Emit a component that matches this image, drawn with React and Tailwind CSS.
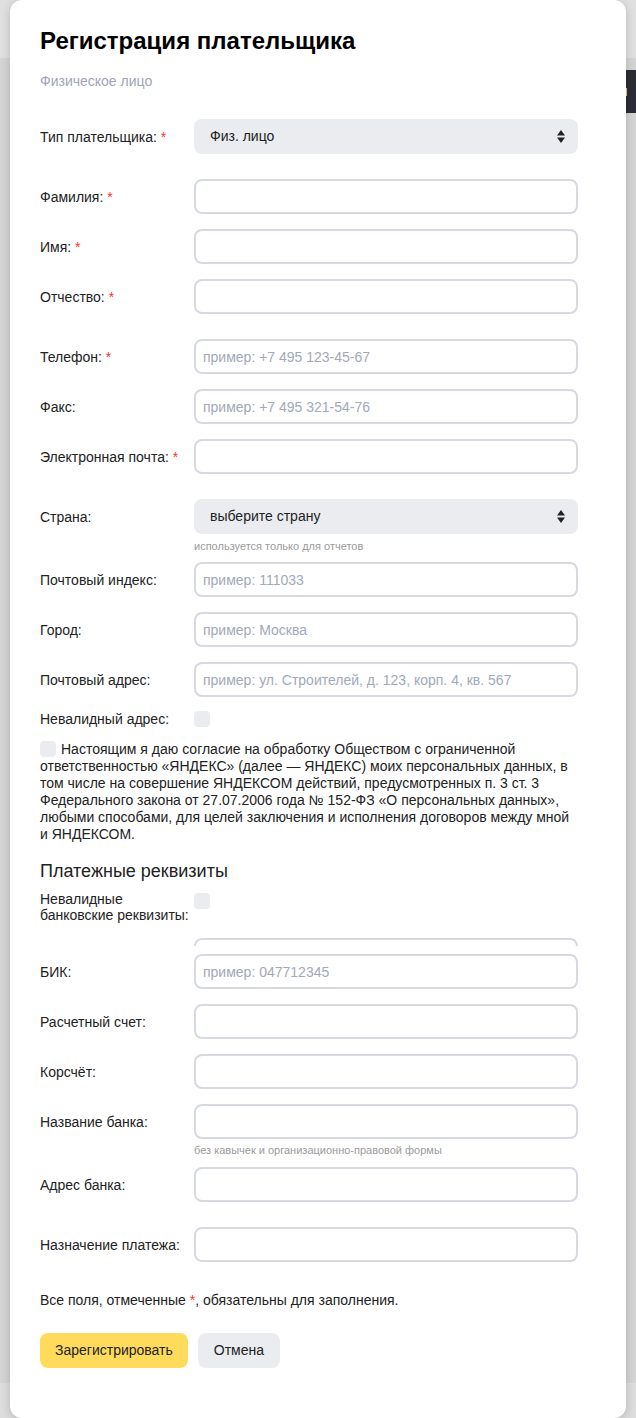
import React from 'react'

const FONT = { fontFamily: '"Liberation Sans", Arial, sans-serif' }

function Req() {
  return <span className="text-[#ff2d2d]"> *</span>
}

function SelectArrows() {
  return (
    <svg width="8" height="13" viewBox="0 0 8 13" className="shrink-0">
      <path d="M0 5.5 L4 0 L8 5.5 Z" fill="#222" />
      <path d="M0 7.5 L8 7.5 L4 13 Z" fill="#222" />
    </svg>
  )
}

function Field({ placeholder }) {
  return (
    <input
      type="text"
      placeholder={placeholder}
      className="block h-[35px] w-full rounded-[8px] border-2 border-[#d6d9e2] bg-white px-[7px] text-[14px] text-[#222] outline-none placeholder:text-[#a3a8ba]"
      style={FONT}
    />
  )
}

function Select({ value }) {
  return (
    <div className="flex h-[35px] w-full items-center justify-between rounded-[8px] bg-[#ebecf0] pl-[16px] pr-[13px] text-[14px] text-[#222]">
      <span>{value}</span>
      <SelectArrows />
    </div>
  )
}

function Row({ label, req, className = '', children }) {
  return (
    <div className={`flex items-center ${className}`}>
      <div className="w-[154px] shrink-0 text-[14px] leading-[16px] text-[#222]">
        {label}
        {req && <Req />}
      </div>
      <div className="w-[384px]">{children}</div>
    </div>
  )
}

function Hint({ children, className = '' }) {
  return (
    <div className={`ml-[154px] text-[11px] leading-[14px] text-[#9b9b9b] ${className}`}>{children}</div>
  )
}

function Checkbox() {
  return <span className="inline-block h-[16px] w-[16px] rounded-[4px] bg-[#ebecf0]" />
}

export default function App() {
  return (
    <div className="relative min-h-[1418px] w-full overflow-hidden bg-[#d4d4d4]" style={FONT}>
      {/* page under the overlay */}
      <div className="absolute inset-0 flex flex-col">
        <div className="h-[58px] bg-[#e0e0e0]" />
        <div className="flex justify-end pt-[12px]">
          <div className="flex h-[43px] w-[30px] items-center bg-[#2c2c36] pl-[6px] text-[14px] text-white">ии</div>
        </div>
        <div className="flex-1" />
        <div className="h-[40px] bg-[#dddddd]" />
      </div>

      {/* modal */}
      <div className="relative mx-[10px] mb-[5px] rounded-[12px] bg-white pb-[50px] pl-[30px] pt-[27px] shadow-[0_2px_10px_rgba(0,0,0,0.18)]">
        <h1 className="text-[24px] font-bold leading-[28px] text-black">Регистрация плательщика</h1>
        <div className="mt-[18px] text-[14px] leading-[16px] text-[#a0a5b8]">Физическое лицо</div>

        <div className="w-[538px]">
          <Row label="Тип плательщика:" req className="mt-[30px]">
            <Select value="Физ. лицо" />
          </Row>

          <Row label="Фамилия:" req className="mt-[25px]">
            <Field />
          </Row>
          <Row label="Имя:" req className="mt-[15px]">
            <Field />
          </Row>
          <Row label="Отчество:" req className="mt-[15px]">
            <Field />
          </Row>

          <Row label="Телефон:" req className="mt-[25px]">
            <Field placeholder="пример: +7 495 123-45-67" />
          </Row>
          <Row label="Факс:" className="mt-[15px]">
            <Field placeholder="пример: +7 495 321-54-76" />
          </Row>
          <Row label="Электронная почта:" req className="mt-[15px]">
            <Field />
          </Row>

          <Row label="Страна:" className="mt-[25px]">
            <Select value="выберите страну" />
          </Row>
          <Hint className="mt-[5px]">используется только для отчетов</Hint>

          <Row label="Почтовый индекс:" className="mt-[9px]">
            <Field placeholder="пример: 111033" />
          </Row>
          <Row label="Город:" className="mt-[15px]">
            <Field placeholder="пример: Москва" />
          </Row>
          <Row label="Почтовый адрес:" className="mt-[15px]">
            <Field placeholder="пример: ул. Строителей, д. 123, корп. 4, кв. 567" />
          </Row>

          <div className="mt-[14px] flex items-center">
            <div className="w-[154px] shrink-0 text-[14px] leading-[16px] text-[#222]">Невалидный адрес:</div>
            <Checkbox />
          </div>

          <p className="mt-[14px] text-[14px] leading-[17px] text-[#222]">
            <span className="mr-[5px] inline-block h-[16px] w-[16px] rounded-[4px] bg-[#ebecf0] align-[-3px]" />
            Настоящим я даю согласие на обработку Обществом с ограниченной ответственностью «ЯНДЕКС» (далее — ЯНДЕКС) моих персональных данных, в том числе на совершение ЯНДЕКСОМ действий, предусмотренных п. 3 ст. 3 Федерального закона от 27.07.2006 года № 152-ФЗ «О персональных данных», любыми способами, для целей заключения и исполнения договоров между мной и ЯНДЕКСОМ.
          </p>

          <h2 className="mt-[17px] text-[18px] leading-[22px] text-[#222]">Платежные реквизиты</h2>

          <div className="mt-[9px] flex items-start">
            <div className="w-[154px] shrink-0 text-[14px] leading-[16px] text-[#222]">Невалидные банковские реквизиты:</div>
            <div className="pt-[1px]">
              <Checkbox />
            </div>
          </div>

          {/* collapsed field, only its top edge shows */}
          <div className="ml-[154px] mt-[15px] h-[8px] overflow-hidden">
            <div className="h-[35px] w-[384px] rounded-[8px] border-2 border-[#d6d9e2]" />
          </div>

          <Row label="БИК:" className="mt-[8px]">
            <Field placeholder="пример: 047712345" />
          </Row>
          <Row label="Расчетный счет:" className="mt-[15px]">
            <Field />
          </Row>
          <Row label="Корсчёт:" className="mt-[15px]">
            <Field />
          </Row>
          <Row label="Название банка:" className="mt-[15px]">
            <Field />
          </Row>
          <Hint className="mt-[4px]">без кавычек и организационно-правовой формы</Hint>
          <Row label="Адрес банка:" className="mt-[10px]">
            <Field />
          </Row>
          <Row label="Назначение платежа:" className="mt-[25px]">
            <Field />
          </Row>

          <p className="mt-[30px] text-[14px] leading-[16px] text-[#222]">
            Все поля, отмеченные <span className="text-[#ff2d2d]">*</span>, обязательны для заполнения.
          </p>

          <div className="mt-[25px] flex gap-[10px]">
            <button className="h-[35px] rounded-[8px] bg-[#ffdb5c] px-[15px] text-[14px] text-[#222]" style={FONT}>
              Зарегистрировать
            </button>
            <button className="h-[35px] rounded-[8px] bg-[#ebecf0] px-[16px] text-[14px] text-[#222]" style={FONT}>
              Отмена
            </button>
          </div>
        </div>
      </div>
    </div>
  )
}
